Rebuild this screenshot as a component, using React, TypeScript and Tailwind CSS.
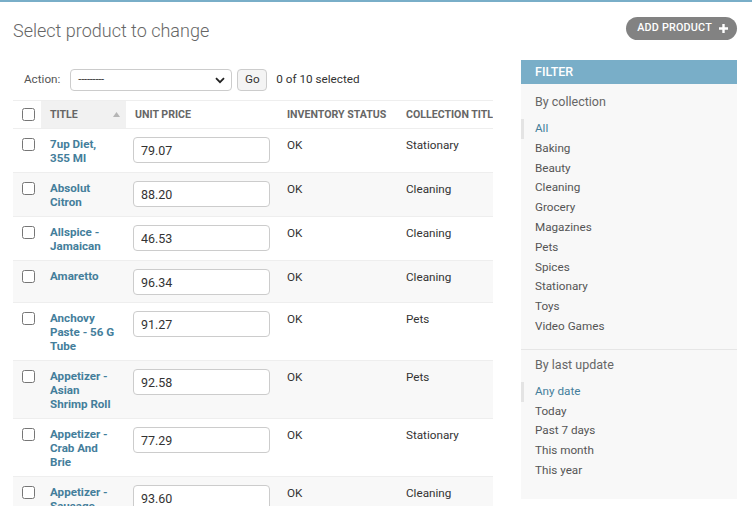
import React from 'react';

type Product = {
  title: string;
  price: string;
  status: string;
  collection: string;
};

const products: Product[] = [
  { title: '7up Diet, 355 Ml', price: '79.07', status: 'OK', collection: 'Stationary' },
  { title: 'Absolut Citron', price: '88.20', status: 'OK', collection: 'Cleaning' },
  { title: 'Allspice - Jamaican', price: '46.53', status: 'OK', collection: 'Cleaning' },
  { title: 'Amaretto', price: '96.34', status: 'OK', collection: 'Cleaning' },
  { title: 'Anchovy Paste - 56 G Tube', price: '91.27', status: 'OK', collection: 'Pets' },
  { title: 'Appetizer - Asian Shrimp Roll', price: '92.58', status: 'OK', collection: 'Pets' },
  { title: 'Appetizer - Crab And Brie', price: '77.29', status: 'OK', collection: 'Stationary' },
  { title: 'Appetizer - Sausage Rolls', price: '93.60', status: 'OK', collection: 'Cleaning' },
];

const collections = [
  'All', 'Baking', 'Beauty', 'Cleaning', 'Grocery', 'Magazines',
  'Pets', 'Spices', 'Stationary', 'Toys', 'Video Games',
];

const dates = ['Any date', 'Today', 'Past 7 days', 'This month', 'This year'];

const Checkbox: React.FC = () => (
  <input
    type="checkbox"
    className="block w-[13px] h-[13px] m-0 accent-[#447e9b]"
  />
);

const FilterSection: React.FC<{ title: string; items: string[]; className?: string }> = ({
  title,
  items,
  className,
}) => (
  <div className={className}>
    <h3 className="px-[14px] text-[12.5px] leading-[20px] text-[#666]">{title}</h3>
    <ul className="mt-[7px]">
      {items.map((item, i) =>
        i === 0 ? (
          <li
            key={item}
            className="border-l-[3px] border-[#e4e4e4] pl-[11px] text-[11.7px] leading-[19.8px] text-[#447e9b]"
          >
            {item}
          </li>
        ) : (
          <li key={item} className="pl-[14px] text-[11.7px] leading-[19.8px] text-[#555]">
            {item}
          </li>
        )
      )}
    </ul>
  </div>
);

const App: React.FC = () => {
  return (
    <div className="min-h-screen bg-white text-[#333] font-['Roboto','Liberation_Sans',sans-serif]">
      <div className="h-[2px] bg-[#79aec8]" />

      <div className="pl-[13px] pr-[15px]">
        {/* title row */}
        <div className="flex items-start justify-between pt-[15px]">
          <h1 className="mt-[2px] text-[18px] leading-[24px] font-light text-[#666]">
            Select product to change
          </h1>
          <button className="flex items-center gap-[6px] h-[23px] pl-[11px] pr-[8px] rounded-full bg-[#828282] text-white text-[10.8px] font-medium tracking-[0.2px]">
            ADD PRODUCT
            <svg width="11" height="11" viewBox="0 0 11 11">
              <path d="M5.5 1v9M1 5.5h9" stroke="white" strokeWidth="2.4" />
            </svg>
          </button>
        </div>

        <div className="flex items-start gap-[28px] mt-[17px]">
          {/* results */}
          <div className="w-[480px] overflow-hidden shrink-0">
            <div className="flex items-center h-[24px] mt-[8px] pl-[11px] text-[11.7px]">
              <span className="text-[#555]">Action:</span>
              <div className="ml-[10px] flex items-center justify-between w-[162px] h-[22px] pl-[7px] pr-[6px] border border-[#ccc] rounded-[4px] bg-white">
                <span className="text-[11px] tracking-[-0.2px] text-[#333]">---------</span>
                <svg width="10" height="7" viewBox="0 0 10 7">
                  <path d="M1 1.2l4 4 4-4" fill="none" stroke="#222" strokeWidth="1.8" />
                </svg>
              </div>
              <button className="ml-[5px] w-[30px] h-[22px] border border-[#ccc] rounded-[4px] bg-[#f4f4f4] text-[11.7px] text-[#333]">
                Go
              </button>
              <span className="ml-[9px] text-[#333]">0 of 10 selected</span>
            </div>

            <table className="mt-[8px] w-[560px] table-fixed border-collapse">
              <colgroup>
                <col className="w-[28px]" />
                <col className="w-[85px]" />
                <col className="w-[152px]" />
                <col className="w-[119px]" />
                <col className="w-[176px]" />
              </colgroup>
              <thead>
                <tr className="h-[28px] border-t border-b border-[#eee] text-left">
                  <th className="pl-[9px] align-middle">
                    <Checkbox />
                  </th>
                  <th className="bg-[#f1f1f1] pl-[9px] pr-[6px] align-middle">
                    <div className="flex items-center justify-between text-[10.6px] font-bold text-[#666]">
                      TITLE
                      <svg width="7" height="5" viewBox="0 0 7 5">
                        <path d="M0 5L3.5 0L7 5Z" fill="#b5b5b5" />
                      </svg>
                    </div>
                  </th>
                  <th className="pl-[9px] text-[10.6px] font-bold text-[#666] align-middle">UNIT PRICE</th>
                  <th className="pl-[9px] text-[10.6px] font-bold text-[#666] align-middle whitespace-nowrap">
                    INVENTORY STATUS
                  </th>
                  <th className="pl-[9px] text-[10.6px] font-bold text-[#666] align-middle whitespace-nowrap">
                    COLLECTION TITLE
                  </th>
                </tr>
              </thead>
              <tbody>
                {products.map((p, i) => (
                  <tr
                    key={p.title}
                    className={`border-b border-[#eee] align-top ${i % 2 === 1 ? 'bg-[#f8f8f8]' : 'bg-white'}`}
                  >
                    <td className="pl-[9px] pt-[9px]">
                      <Checkbox />
                    </td>
                    <th className="pl-[9px] pr-[8px] pt-[8px] pb-[7px] text-left text-[11.6px] leading-[14px] font-bold text-[#447e9b]">
                      {p.title}
                    </th>
                    <td className="pl-[7px] pt-[8px] pb-[7px]">
                      <input
                        readOnly
                        value={p.price}
                        className="block w-[137px] h-[26px] px-[7px] border border-[#ccc] rounded-[4px] bg-white text-[12.5px] text-[#333] outline-none"
                      />
                    </td>
                    <td className="pl-[9px] pt-[9px] text-[11.7px] leading-[14px]">{p.status}</td>
                    <td className="pl-[9px] pt-[9px] text-[11.7px] leading-[14px]">{p.collection}</td>
                  </tr>
                ))}
              </tbody>
            </table>
          </div>

          {/* filter */}
          <aside className="w-[216px] shrink-0 bg-[#f8f8f8]">
            <h2 className="h-[24px] pl-[14px] bg-[#79aec8] text-white text-[12.5px] font-medium leading-[24px]">
              FILTER
            </h2>
            <FilterSection title="By collection" items={collections} className="pt-[8px] pb-[12px] border-b border-[#e6e6e6]" />
            <FilterSection title="By last update" items={dates} className="pt-[5px] pb-[18px]" />
          </aside>
        </div>
      </div>
    </div>
  );
};

export default App;
